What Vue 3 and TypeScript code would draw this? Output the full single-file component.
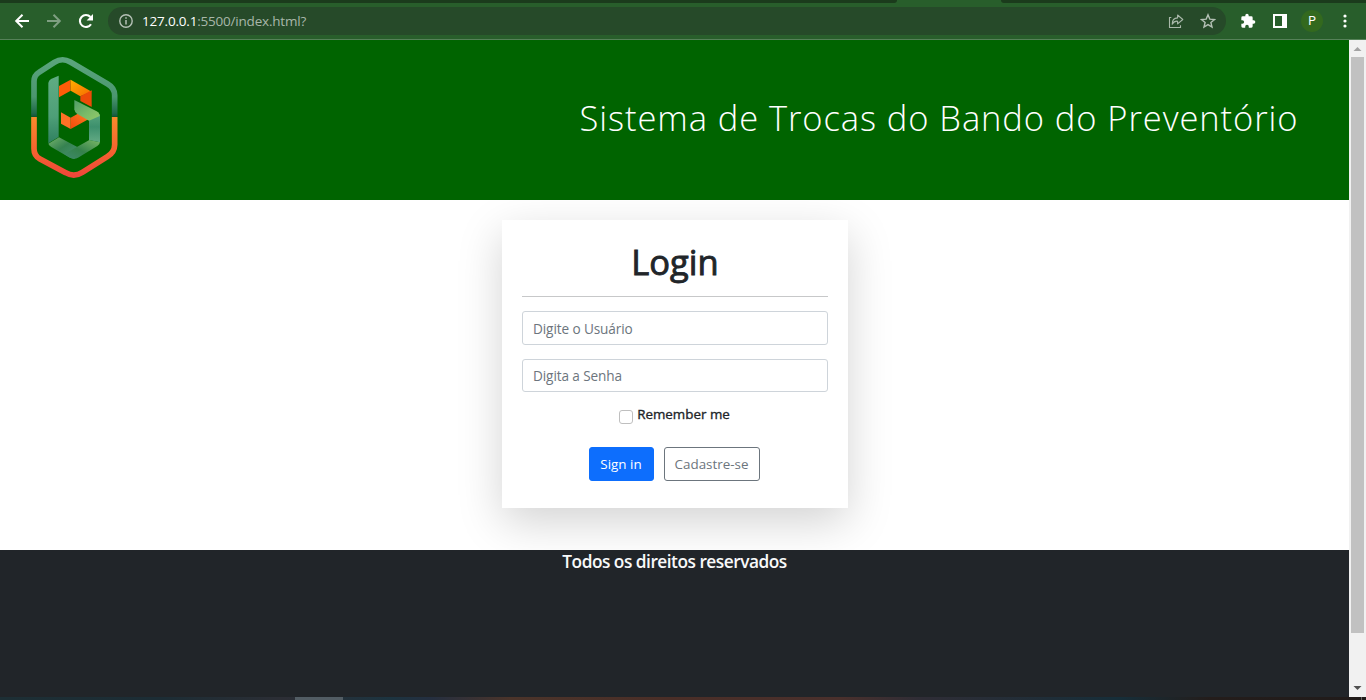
<script setup lang="ts">
import { ref } from 'vue'

const user = ref('')
const password = ref('')
const remember = ref(false)
</script>

<template>
  <div class="window">
    <div class="tabs"><i class="left"></i><i class="right"></i></div>
    <div class="toolbar">
      <div class="nav">
        <svg width="16" height="16" viewBox="0 0 16 16" fill="none" stroke="#fff" stroke-width="2"><path d="M15 8H2.5M8.500 1.700L2.200 8l6.300 6.300" /></svg>
        <svg width="16" height="16" viewBox="0 0 16 16" fill="none" stroke="#7f9f82" stroke-width="2"><path d="M1 8h12.500M7.500 1.700L13.800 8l-6.300 6.300" /></svg>
        <svg width="16" height="16" viewBox="0 0 16 16"><path d="M13 11.200A6 6 0 1 1 12.400 4" fill="none" stroke="#fff" stroke-width="2.1" /><path d="M15 1v6.400H8.600z" fill="#fff" /></svg>
      </div>
      <div class="address">
        <svg class="info" width="14" height="14" viewBox="0 0 14 14"><circle cx="7" cy="7" r="6.2" fill="none" stroke="#b5c1b6" stroke-width="1.4" /><path d="M7 6v4.600M7 3.200v1.600" stroke="#b5c1b6" stroke-width="1.5" /></svg>
        <span class="url"><b>127.0.0.1</b>:5500/index.html?</span>
        <svg class="share" width="16" height="16" viewBox="0 0 16 16" fill="none" stroke="#a9b8aa" stroke-width="1.1"><path d="M3.300 4.500H1.500v10h11v-2.200" /><path d="M4.200 11.200C4.200 7 6 5 9.600 4.900V2l5.200 4.500-5.200 4.400V8.200C7.200 8 5.400 9 4.200 11.200z" stroke-linejoin="round" /></svg>
        <svg class="star" width="16" height="16" viewBox="0 0 16 16" fill="none" stroke="#b4c0b5" stroke-width="1.4"><path d="M8 1.800l1.800 4.300 4.700.4-3.600 3 1.100 4.600L8 11.600l-4 2.500 1.100-4.600-3.600-3 4.700-.4z" /></svg>
      </div>
      <svg class="puzzle" width="16" height="16" viewBox="0 0 24 24" fill="#fff"><path d="M20.500 11H19V7a2 2 0 0 0-2-2h-4V3.500a2.500 2.500 0 0 0-5 0V5H4a2 2 0 0 0-2 2v3.800h1.500a2.700 2.700 0 0 1 0 5.400H2V20a2 2 0 0 0 2 2h3.800v-1.500a2.700 2.700 0 0 1 5.400 0V22H17a2 2 0 0 0 2-2v-4h1.500a2.500 2.500 0 0 0 0-5z" /></svg>
      <i class="panel"></i>
      <span class="avatar">P</span>
      <svg class="dots" width="4" height="14" viewBox="0 0 4 14" fill="#fff"><circle cx="2" cy="2" r="1.6" /><circle cx="2" cy="7" r="1.6" /><circle cx="2" cy="12" r="1.6" /></svg>
    </div>

    <div class="viewport">
      <div class="page">
        <header>
          <svg class="logo" width="110" height="135" viewBox="0 0 330 405">
            <defs>
              <linearGradient id="rimTop" x1="0" y1="0" x2="0" y2="1"><stop offset="0" stop-color="#5ba57d" /><stop offset=".65" stop-color="#4b966f" /><stop offset=".94" stop-color="#1f6847" /><stop offset="1" stop-color="#15513a" /></linearGradient>
              <linearGradient id="rimBottom" x1="0" y1="0" x2="0" y2="1"><stop offset="0" stop-color="#f98b2c" /><stop offset=".5" stop-color="#f6682e" /><stop offset="1" stop-color="#ef4739" /></linearGradient>
              <linearGradient id="stem" x1="0" y1="0" x2="0" y2="1"><stop offset="0" stop-color="#60ac83" /><stop offset=".6" stop-color="#4e9f78" /><stop offset="1" stop-color="#2f8060" /></linearGradient>
              <linearGradient id="footLeft" x1="0" y1="0" x2="1" y2="1"><stop offset="0" stop-color="#75b36b" /><stop offset=".45" stop-color="#368251" /><stop offset="1" stop-color="#4b9579" /></linearGradient>
              <linearGradient id="footRight" x1="0" y1="1" x2="1" y2="0"><stop offset="0" stop-color="#3f896b" /><stop offset=".45" stop-color="#35824b" /><stop offset="1" stop-color="#7bb867" /></linearGradient>
              <linearGradient id="side" x1="0" y1="0" x2="0" y2="1"><stop offset="0" stop-color="#55a47c" /><stop offset=".45" stop-color="#3d906d" /><stop offset="1" stop-color="#63aa84" /></linearGradient>
              <linearGradient id="fold" x1="0" y1="0" x2="1" y2="1"><stop offset="0" stop-color="#4f9d68" /><stop offset=".55" stop-color="#79ba68" /><stop offset="1" stop-color="#92ca69" /></linearGradient>
              <linearGradient id="amber" x1="0" y1="0" x2="1" y2="1"><stop offset="0" stop-color="#ffae00" /><stop offset="1" stop-color="#f76a00" /></linearGradient>
              <linearGradient id="ember" x1="0" y1="1" x2="1" y2="0"><stop offset="0" stop-color="#f04a0b" /><stop offset="1" stop-color="#ff7a22" /></linearGradient>
            </defs>
            <path d="M42 200V94Q42 76 57 67L103 37Q127 22 151 36L263 102Q284 114 284 136V200" fill="none" stroke="url(#rimTop)" stroke-width="17" />
            <path d="M42 201V296Q42 317 60 327L137 368Q162 383 187 367L262 320Q284 306 284 284V201" fill="none" stroke="url(#rimBottom)" stroke-width="17" />
            <path d="M85 99Q86 91 93 87L116 77V261L85 280z" fill="url(#stem)" />
            <path d="M85 281L117 262L182 296L163 327Q155 326 147 322L94 291Q87 287 85 281z" fill="url(#footLeft)" />
            <path d="M133 312L208 270L240 277Q239 283 232 288L174 323Q163 329 150 323z" fill="url(#footRight)" />
            <path d="M207 211L240 193V277L207 270z" fill="url(#side)" />
            <path d="M117 108L152 89V122L117 142z" fill="#ff5c08" />
            <path d="M152 89L215 125L181 139L152 122z" fill="url(#amber)" />
            <path d="M181 139L215 121V171L181 153z" fill="#ed4b08" />
            <path d="M123 187L152 203V237L123 221z" fill="#ff7126" />
            <path d="M152 203L176 190L205 208L152 237z" fill="url(#ember)" />
            <path d="M163 150L230 184Q240 190 239 198L207 212L171 191Q164 186 163 178z" fill="url(#fold)" />
          </svg>
          <svg class="title" width="730" height="60"><text x="10.5" y="41" textLength="718" lengthAdjust="spacing">Sistema de Trocas do Bando do Preventório</text></svg>
        </header>

        <main>
          <form class="card" @submit.prevent>
            <h1>Login</h1>
            <hr />
            <input v-model="user" class="field" type="text" placeholder="Digite o Usuário" />
            <input v-model="password" class="field second" type="password" placeholder="Digita a Senha" />
            <label class="remember"><input v-model="remember" type="checkbox" /><span>Remember me</span></label>
            <div class="actions">
              <button class="primary" type="submit">Sign in</button>
              <button class="outline" type="button">Cadastre-se</button>
            </div>
          </form>
        </main>
        <footer><span>Todos os direitos reservados</span></footer>
      </div>
      <div class="scrollbar">
        <svg width="17" height="17"><path d="M4.500 11h8L8.500 7z" fill="#a3a3a3" /></svg>
        <i class="thumb"></i>
        <svg width="17" height="17"><path d="M4.500 6h8L8.500 10z" fill="#505050" /></svg>
      </div>
    </div>
    <div class="taskbar"><i class="task"></i><i class="edge"></i></div>
  </div>
</template>

<style>
body { margin: 0; overflow: hidden; }
</style>

<style scoped>
* { box-sizing: border-box; }
svg { display: block; flex: none; }
.window { width: 1366px; height: 700px; display: flex; flex-direction: column; overflow: hidden; font-family: "Open Sans", "Noto Sans", sans-serif; background: #fff; }
.tabs { height: 3px; flex: none; display: flex; justify-content: space-between; background: #285e2b; }
.tabs .left { width: 897px; background: #1b3b1c; border-bottom-right-radius: 4px; }
.tabs .right { width: 365px; background: #1b3b1c; border-bottom-left-radius: 4px; }
.toolbar { height: 37px; flex: none; display: flex; align-items: center; background: #285e2b; border-bottom: 1px solid #568159; }
.nav { display: flex; gap: 16px; margin-left: 14px; }
.address { width: 1118px; height: 28px; margin-left: 14px; border-radius: 14px; background: #264a29; display: flex; align-items: center; }
.info { margin-left: 11px; }
.url { margin-left: 9px; font-size: 13.5px; line-height: 20px; letter-spacing: -.2px; color: #a8b7a9; white-space: nowrap; }
.url b { font-weight: 400; color: #fff; }
.share { margin-left: auto; }
.star { margin-left: 16px; margin-right: 10px; }
.puzzle { margin-left: 14px; }
.panel { width: 14px; height: 14px; margin-left: 17px; border: 2px solid #fff; border-right-width: 5px; }
.avatar { width: 22px; height: 22px; margin-left: 14px; border-radius: 50%; background: #33691e; color: #fff; font: 12px/22px Roboto, sans-serif; text-align: center; }
.dots { margin-left: 20px; }
.viewport { height: 657px; flex: none; display: flex; }
.page { width: 1349px; display: flex; flex-direction: column; }
header { height: 160px; flex: none; display: flex; justify-content: space-between; align-items: flex-start; background: #006400; padding: 10px 50px 0 20px; }
.title { margin-top: 40px; }
.title text { font-size: 34.5px; font-weight: 300; fill: #fff; }
main { height: 350px; flex: none; padding-top: 20px; display: flex; justify-content: center; align-items: flex-start; overflow: hidden; }
.card { width: 346px; height: 288px; margin-left: 1px; padding: 20px; background: #fff; box-shadow: 0 14px 42px rgba(0, 0, 0, .175); display: flex; flex-direction: column; }
h1 { margin: 1px 0 0; height: 42px; font-size: 34.5px; font-weight: 400; line-height: 42px; text-align: center; color: #212529; -webkit-text-stroke: .9px #212529; }
hr { width: 100%; height: 1px; margin: 13px 0 14px; border: 0; background: #c7c8c9; }
.field { width: 100%; height: 34px; flex: none; border: 1px solid #ced4da; border-radius: 3px; padding: 0 10px; font: 13.6px/21px "Open Sans", sans-serif; letter-spacing: -.1px; color: #212529; background: #fff; outline: 0; }
.field::placeholder { color: #6c757d; opacity: 1; }
.second { height: 33px; margin-top: 14px; }
.remember { display: flex; justify-content: center; height: 21px; margin: 12px 1px 0 0; font-size: 13.4px; line-height: 21px; color: #212529; -webkit-text-stroke: .35px #212529; }
.remember input { appearance: none; width: 14px; height: 14px; margin: 6px 4px 0 0; border: 1px solid #bfbfbf; border-radius: 3px; background: #fff; }
.remember input:checked { background: #0d6efd; }
.actions { display: flex; justify-content: center; gap: 10px; margin: 22px 2px 0 0; }
button { height: 34px; padding: 0; border-radius: 3px; font: 13.4px/32px "Open Sans", sans-serif; white-space: nowrap; }
.primary { width: 65px; border: 1px solid #0d6efd; background: #0d6efd; color: #fff; }
.outline { width: 96px; border: 1px solid #6c757d; background: #fff; color: #6c757d; }
footer { flex: 1; background: #212529; color: #f8f9fa; text-align: center; font-size: 17.3px; font-weight: 600; line-height: 24px; }
footer span { letter-spacing: -.5px; }
.scrollbar { width: 17px; background: #f1f1f1; display: flex; flex-direction: column; }
.thumb { width: 13px; height: 576px; margin: 0 2px; background: #c1c1c1; }
.scrollbar svg:last-child { margin-top: auto; }
.taskbar { height: 3px; display: flex; background: linear-gradient(90deg, #1d2f35 0, #1c2d35 160px, #2c2e35 285px, #1c3440 390px, #242f40 430px, #4b342a 510px, #4a2e27 670px, #4a302c 840px, #2f2d36 920px, #162e39 1120px, #241d1b 1210px, #201b1a 1366px); }
.task { width: 48px; margin-left: 295px; background: #525d64; }
.edge { width: 1px; margin-left: 1018px; background: #666; }
</style>
